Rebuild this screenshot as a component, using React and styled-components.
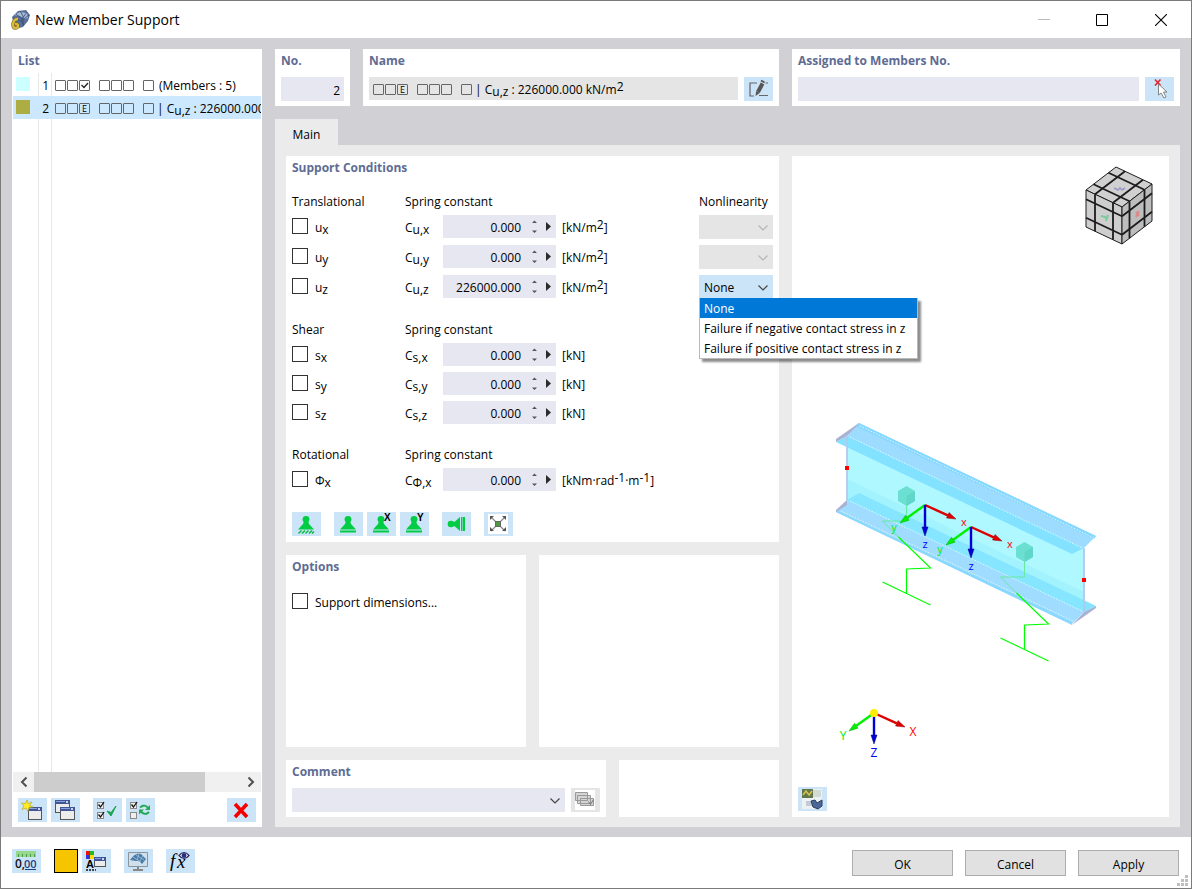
import React, { useState } from 'react';
import styled, { createGlobalStyle, css } from 'styled-components';

const GlobalStyle = createGlobalStyle`
  *,
  *::before,
  *::after {
    box-sizing: border-box;
  }

  body {
    margin: 0;
    color: #000;
    background: #fff;
    font-family: 'Open Sans', 'Noto Sans', sans-serif;
    font-size: 12px;
    line-height: 20px;
  }

  button,
  input,
  select {
    color: inherit;
    font: inherit;
  }
`;

const Window = styled.div`
  display: flex;
  flex-direction: column;
  min-width: 1100px;
  min-height: 100vh;
  border: 1px solid #7b7b7b;
`;

const TitleBar = styled.header`
  display: flex;
  align-items: center;
  height: 37px;
  padding-left: 8px;
  background: #fff;

  h1 {
    flex: 1;
    margin: 0 0 0 5px;
    font-size: 14px;
    font-weight: 400;
  }
`;

const WindowButton = styled.button`
  display: grid;
  place-items: center;
  width: ${({ $wide }) => ($wide ? 60 : 58)}px;
  height: 36px;
  padding: 0;
  border: 0;
  background: none;
`;

const Workspace = styled.main`
  display: flex;
  flex: 1;
  gap: 13px;
  padding: 11px 11px 10px;
  background: #d1d0d5;
`;

const Panel = styled.section`
  display: flex;
  flex-direction: column;
  min-width: 0;
  padding: 0 6px 5px;
  background: #fff;
`;

const PanelTitle = styled.h2`
  margin: 0;
  color: #5e6c94;
  font-size: 12px;
  font-weight: 700;
  line-height: 23px;
`;

const ListPanel = styled(Panel)`
  flex: 0 0 250px;
`;

const Tree = styled.ul`
  flex: 1;
  margin: 1px -5px 0;
  padding: 0;
  overflow: hidden;
  list-style: none;
  background:
    linear-gradient(#e8e8e8, #e8e8e8) 25px 0 / 1px 100% no-repeat,
    linear-gradient(#e8e8e8, #e8e8e8) 38px 0 / 1px 100% no-repeat;
`;

const TreeRow = styled.li`
  display: grid;
  grid-template-columns: 14px 15px 1fr;
  align-items: center;
  column-gap: 5px;
  height: 23px;
  padding: 2px 0 0 3px;
  overflow: hidden;
  white-space: nowrap;
  background: ${({ $selected }) => ($selected ? '#cce8ff' : 'transparent')};

  > :nth-child(2) {
    padding-right: 1px;
    text-align: right;
  }
`;

const Swatch = styled.span`
  width: 14px;
  height: 14px;
  margin-bottom: 4px;
  background: ${({ $color }) => $color};
`;

const Caption = styled.span`
  display: flex;
  align-items: center;
  white-space: pre;
`;

const CodeGroup = styled.span`
  display: flex;
  gap: 1px;
  margin-right: ${({ $gap = 9 }) => $gap}px;
`;

const CodeBox = styled.span`
  display: grid;
  place-items: center;
  width: 11px;
  height: 11px;
  border: 1px solid #666;
  border-radius: 1px;
  color: #000;
  font-size: 9px;
  line-height: 9px;
`;

const ScrollBar = styled.div`
  display: flex;
  align-items: center;
  height: 20px;
  margin: 0 -5px 6px;
  background: #f0f0f0;

  button {
    display: grid;
    place-items: center;
    width: 21px;
    height: 20px;
    padding: 0;
    border: 0;
    background: none;
  }
`;

const ScrollTrack = styled.div`
  flex: 1;

  &::before {
    content: '';
    display: block;
    width: 83%;
    height: 20px;
    background: #cdcdcd;
  }
`;

const Toolbar = styled.div`
  display: flex;
  align-items: center;
`;

const ToolGroup = styled.div`
  display: flex;
  gap: 4px;
  margin-right: 13px;

  &:last-child {
    margin: 0 0 0 ${({ $end }) => ($end ? 'auto' : 0)};
  }
`;

const IconButton = styled.button`
  flex: none;
  width: 29px;
  height: 24px;
  padding: 0;
  border: 0;
  background: ${({ $muted }) => ($muted ? '#e5e5e5' : '#cce4f7')};

  svg {
    display: block;
  }
`;

const Content = styled.div`
  display: flex;
  flex: 1;
  flex-direction: column;
  min-width: 0;
`;

const IdentityRow = styled.div`
  display: grid;
  grid-template-columns: 75px 416px minmax(0, 1fr);
  gap: 13px;
`;

const FieldRow = styled.div`
  display: flex;
  gap: 6px;
  margin-top: 5px;
`;

const TextField = styled.input`
  flex: 1;
  width: 100%;
  min-width: 0;
  height: 24px;
  padding: 2px 4px 0;
  border: 0;
  background: #e7e7f2;
  text-align: ${({ $right }) => ($right ? 'right' : 'left')};
`;

const NameField = styled.div`
  display: flex;
  flex: 1;
  align-items: center;
  height: 23px;
  padding: 2px 0 0 4px;
  background: #e5e5e5;
`;

const Tabs = styled.div`
  display: flex;
  margin-top: 13px;

  button {
    width: 63px;
    height: 26px;
    padding: 6px 0 0;
    border: 0;
    background: #ebebeb;
  }
`;

const TabPage = styled.div`
  display: grid;
  flex: 1;
  grid-template-columns: 493px minmax(0, 1fr);
  gap: 13px;
  padding: 11px 11px 10px;
  background: #ebebeb;
`;

const Column = styled.div`
  display: flex;
  flex-direction: column;
  gap: 13px;
`;

const Split = styled.div`
  display: grid;
  flex: ${({ $grow }) => ($grow ? 1 : 'none')};
  grid-template-columns: ${({ $columns }) => $columns};
  gap: 13px;
`;

const ConditionsPanel = styled(Panel)`
  padding-bottom: 6px;
`;

const Group = styled.div`
  display: grid;
  gap: 6px;
  margin-top: ${({ $first }) => ($first ? 10 : 18)}px;
`;

const gridColumns = css`
  display: grid;
  grid-template-columns: 113px 38px 119px 1fr 74px;
`;

const GroupHead = styled.div`
  ${gridColumns}
  margin-bottom: -6px;
  line-height: 26px;
  white-space: nowrap;

  > :last-child {
    grid-column: 5;
  }

  > :nth-child(2) {
    grid-column: 2 / 4;
  }
`;

const Subscript = styled.sub`
  font-size: 12px;
  line-height: 0;
  vertical-align: -2px;
`;

const Superscript = styled.sup`
  font-size: 12px;
  line-height: 0;
  vertical-align: 3px;
`;

const ConditionRow = styled.div`
  ${gridColumns}
  align-items: start;
`;

const RowText = styled.span`
  display: block;
  padding-top: 3px;
`;

const CheckLabel = styled.label`
  display: flex;
  align-items: flex-start;
  gap: 7px;
`;

const CheckBox = styled.input.attrs({ type: 'checkbox' })`
  appearance: none;
  width: 16px;
  height: 16px;
  margin: 3px 0 0;
  border: 1px solid #333;
  background: #fff;

  &:checked {
    background: #333;
    box-shadow: inset 0 0 0 3px #fff;
  }
`;

const SpinField = styled.div`
  display: flex;
  width: 113px;
  height: 23px;
  background: #e7e7f2;

  input {
    flex: 1;
    min-width: 0;
    padding: 2px 7px 0 0;
    border: 0;
    background: none;
    text-align: right;
  }
`;

const SpinButton = styled.button`
  display: grid;
  place-items: center;
  width: 13px;
  padding: 0;
  border: 0;
  background: none;

  &:last-child {
    width: 15px;
  }
`;

const SelectBox = styled.div`
  position: relative;
  min-width: 0;

  select {
    display: block;
    appearance: none;
    width: 100%;
    height: 24px;
    padding: 2px 20px 0 5px;
    border: 0;
    border-radius: 0;
    background: ${({ $tone }) => $tone};
    opacity: 1;
  }

  > svg {
    position: absolute;
    top: 9px;
    right: 4px;
    pointer-events: none;
  }
`;

const CommentSelect = styled(SelectBox)`
  flex: 1;
`;

const Menu = styled.ul`
  position: absolute;
  z-index: 2;
  top: 23px;
  left: 0;
  width: 219px;
  margin: 0;
  padding: 0;
  border: 1px solid #bababa;
  border-top: 0;
  background: #fff;
  box-shadow: 3px 3px 2px rgba(0, 0, 0, 0.45);
  list-style: none;
  white-space: nowrap;
`;

const MenuItem = styled.li`
  height: 20px;
  padding-left: 4px;
  color: ${({ $active }) => ($active ? '#fff' : '#000')};
  background: ${({ $active }) => ($active ? '#0078d7' : 'transparent')};
  line-height: 22px;
`;

const SupportTools = styled(Toolbar)`
  margin-top: 21px;
`;

const OptionsBody = styled.div`
  margin-top: 12px;
`;

const Viewer = styled.div`
  position: relative;
  min-width: 0;
  background: #fff;

  > svg {
    position: absolute;
    width: 100%;
    height: 100%;
  }

  > button {
    position: absolute;
    bottom: 6px;
    left: 6px;
  }
`;

const Footer = styled.footer`
  position: relative;
  display: flex;
  align-items: center;
  justify-content: space-between;
  height: 51px;
  padding: 0 11px 4px;
  background: #fff;
`;

const ColorButton = styled.button`
  width: 24px;
  height: 24px;
  border: 1px solid #000;
  background: #f7c400;
`;

const Actions = styled.div`
  display: flex;
  gap: 12px;
  margin: 5px 1px 0 0;
`;

const ActionButton = styled.button`
  width: 101px;
  height: 26px;
  padding: 3px 0 0;
  border: 1px solid #adadad;
  background: #e1e1e1;
`;

const Grip = styled.svg`
  position: absolute;
  right: 3px;
  bottom: 2px;
`;

const Glyph = ({ children }) => (
  <svg width="29" height="24" viewBox="0 0 29 24" aria-hidden="true">
    {children}
  </svg>
);

const Tool = ({ label, muted, children }) => (
  <IconButton type="button" aria-label={label} title={label} $muted={muted}>
    <Glyph>{children}</Glyph>
  </IconButton>
);

const Chevron = ({ color = '#444' }) => (
  <svg width="12" height="8" viewBox="0 0 12 8" aria-hidden="true">
    <path d="M1.5 1.5L6 6L10.5 1.5" fill="none" stroke={color} strokeWidth="1.2" />
  </svg>
);

const MiniWindow = ({ x, y, w = 14, h = 12 }) => (
  <g transform={`translate(${x} ${y})`}>
    <rect x=".5" y=".5" width={w - 1} height={h - 1} fill="#ececec" stroke="#555" />
    <rect width={w} height="4" fill="#3f5596" />
    <path d={`M1 1.5H${w - 5}`} stroke="#8ba0dc" />
    <path d={`M${w - 4} 2h2`} stroke="#fff" strokeWidth="1.5" />
  </g>
);

const Stamp = ({ hatched, letter }) => (
  <>
    <circle cx="14" cy="7.3" r="3.4" fill="#00cc44" />
    <path d="M12 9h4l1 3 5 5.5H6L11 12z" fill="#00cc44" />
    {hatched ? (
      <path
        d="M6.500 21.500l3-3M10 21.500l3-3M13.500 21.500l3-3M17 21.500l3-3M20 21.500l2-2"
        stroke="#00b83d"
        strokeWidth="1.4"
      />
    ) : (
      <path d="M6 19.500h16" stroke="#00cc44" strokeWidth="2" />
    )}
    {letter && (
      <text x="17" y="9" fontSize="10" fontWeight="700" fontFamily="Liberation Sans, sans-serif">
        {letter}
      </text>
    )}
  </>
);

const TickedBox = ({ x, y, ticked = true }) => (
  <g transform={`translate(${x} ${y})`}>
    <rect x=".5" y=".5" width="6" height="6" fill="#eee" stroke="#8a8a8a" />
    {ticked && <path d="M1.5 2.500l2 2.500L7 0" fill="none" stroke="#111" strokeWidth="1.3" />}
  </g>
);

const AppIcon = () => (
  <svg width="21" height="21" viewBox="0 0 21 21" aria-hidden="true">
    <path d="M3 8L9 2l8-1 4 5-2 6-5 6-8 2z" fill="#5a6f98" />
    <path d="M5 6l6-3 7 1 1 5-4 1-4-3z" fill="#a6b9d6" />
    <path
      d="M7 5l6 5 5-7M4 9l8 3 8-6M11 2l3 5v10M12 12l3 4"
      fill="none"
      stroke="#344b78"
      strokeWidth=".8"
    />
    <path d="M9 10C3 10 3 19 6 19c4 0 4-5 0-4" fill="none" stroke="#6b6128" strokeWidth="3.600" />
    <path d="M9 10C3 10 3 19 6 19c4 0 4-5 0-4" fill="none" stroke="#dcba3a" strokeWidth="2.400" />
  </svg>
);

// Three groups of restraint boxes; the third box of the first group carries a mark.
const RestraintCode = ({ mark }) => (
  <>
    <CodeGroup>
      <CodeBox />
      <CodeBox />
      <CodeBox>
        {mark || (
          <svg width="9" height="9" viewBox="0 0 9 9" aria-hidden="true">
            <path d="M1.500 4L4 6.500L8 2" fill="none" stroke="#222" strokeWidth="1.300" />
          </svg>
        )}
      </CodeBox>
    </CodeGroup>
    <CodeGroup>
      <CodeBox />
      <CodeBox />
      <CodeBox />
    </CodeGroup>
    <CodeGroup $gap={mark ? 3 : 5}>
      <CodeBox />
    </CodeGroup>
  </>
);

const areaUnit = (
  <>
    [kN/m<Superscript>2</Superscript>]
  </>
);

const groups = [
  {
    title: 'Translational',
    symbol: 'u',
    unit: areaUnit,
    rows: [
      { axis: 'x', value: '0.000', select: 'disabled' },
      { axis: 'y', value: '0.000', select: 'disabled' },
      { axis: 'z', value: '226000.000', select: 'open' },
    ],
  },
  {
    title: 'Shear',
    symbol: 's',
    unit: '[kN]',
    rows: [
      { axis: 'x', value: '0.000' },
      { axis: 'y', value: '0.000' },
      { axis: 'z', value: '0.000' },
    ],
  },
  {
    title: 'Rotational',
    symbol: 'Φ',
    unit: (
      <>
        [kNm·rad<Superscript>-1</Superscript>·m<Superscript>-1</Superscript>]
      </>
    ),
    rows: [{ axis: 'x', value: '0.000' }],
  },
];

const nonlinearities = [
  'None',
  'Failure if negative contact stress in z',
  'Failure if positive contact stress in z',
];

const NonlinearitySelect = ({ axis, state }) => {
  const [value, setValue] = useState(nonlinearities[0]);
  const open = state === 'open';

  return (
    <SelectBox $tone={open ? '#cce4f7' : '#e5e5e5'}>
      {open ? (
        <select
          aria-label={`Nonlinearity ${axis}`}
          value={value}
          onChange={e => setValue(e.target.value)}>
          {nonlinearities.map(item => (
            <option key={item}>{item}</option>
          ))}
        </select>
      ) : (
        <select aria-label={`Nonlinearity ${axis}`} disabled />
      )}
      <Chevron color={open ? '#444' : '#b5b5b5'} />
      {open && (
        <Menu role="listbox" aria-label="Nonlinearity">
          {nonlinearities.map(item => (
            <MenuItem
              key={item}
              role="option"
              aria-selected={item === value}
              $active={item === value}
              onClick={() => setValue(item)}>
              {item}
            </MenuItem>
          ))}
        </Menu>
      )}
    </SelectBox>
  );
};

const Condition = ({ symbol, unit, axis, value, select }) => {
  const id = `c-${symbol}-${axis}`;

  return (
    <ConditionRow>
      <CheckLabel>
        <CheckBox />
        <RowText>
          {symbol}
          <Subscript>{axis}</Subscript>
        </RowText>
      </CheckLabel>
      <RowText as="label" htmlFor={id}>
        C
        <Subscript>
          {symbol},{axis}
        </Subscript>
      </RowText>
      <SpinField>
        <input id={id} type="text" defaultValue={value} />
        <SpinButton type="button" aria-label="Step value">
          <svg width="7" height="15" viewBox="0 0 7 15" aria-hidden="true">
            <path d="M1 4L3.500 1.500L6 4zM1 11.500L3.500 14L6 11.500z" fill="#555" />
          </svg>
        </SpinButton>
        <SpinButton type="button" aria-label="More">
          <svg width="5" height="9" viewBox="0 0 5 9" aria-hidden="true">
            <path d="M0 0L5 4.500L0 9z" fill="#2b2b2b" />
          </svg>
        </SpinButton>
      </SpinField>
      <RowText>{unit}</RowText>
      {select && <NonlinearitySelect axis={axis} state={select} />}
    </ConditionRow>
  );
};

const Arrow = ({ from, to, color, dark }) => {
  const dx = to[0] - from[0];
  const dy = to[1] - from[1];
  const len = Math.hypot(dx, dy);
  const ux = dx / len;
  const uy = dy / len;
  const bx = to[0] - ux * 9;
  const by = to[1] - uy * 9;

  return (
    <g>
      <path d={`M${from}L${bx} ${by}`} stroke={color} strokeWidth="2.400" />
      <path
        d={`M${to}L${bx - uy * 3} ${by + ux * 3}L${bx + uy * 3} ${by - ux * 3}z`}
        fill={color}
        stroke={dark}
        strokeWidth=".5"
      />
    </g>
  );
};

const Triad = ({ x, y, labels, big }) => (
  <g fontSize={big ? 12 : 11} textAnchor="middle">
    <Arrow from={[x, y]} to={[x + 31, y + 14]} color="#dd0000" dark="#900" />
    <Arrow from={[x, y]} to={[x - 25, y + 18]} color="#00f000" dark="#0a0" />
    <Arrow from={[x, y]} to={[x, y + 31]} color="#0000d8" dark="#008" />
    {big && <circle cx={x} cy={y} r="4" fill="#ffee00" />}
    <text x={x + 39} y={y + (big ? 23 : 21)} fill="#f00">{labels[0]}</text>
    <text x={x - 31} y={y + (big ? 27 : 26)} fill="#0e0">{labels[1]}</text>
    <text x={x} y={y + (big ? 44 : 43)} fill="#00f">{labels[2]}</text>
  </g>
);

const Spring = ({ x, y }) => (
  <g transform={`translate(${x} ${y})`} fill="none">
    <path d="M0 0V25L-24 25L-8 41" stroke="#66eaa0" />
    <path d="M-8 41L24 72L0 73V97M-24 86L24 109" stroke="#00ff00" strokeWidth="1.200" />
    <path d="M0 -10L8.500 -5V5L0 10L-8.500 5V-5z" fill="#6be0d2" />
    <path d="M0 0L8.500 -5V5L0 10z" fill="#60d6c8" />
  </g>
);

// One side of the view cube, with its edge strips at a quarter and three quarters.
const CubeSide = ({ origin: [x, y], u, v, fill }) => {
  const at = (a, b) => `${x + u[0] * a + v[0] * b} ${y + u[1] * a + v[1] * b}`;

  return (
    <g stroke="#1c1c1c">
      <path
        d={`M${at(0, 0)}L${at(1, 0)}L${at(1, 1)}L${at(0, 1)}z`}
        fill={fill}
        strokeWidth="1"
      />
      {[0.25, 0.75].map(t => (
        <path key={t} d={`M${at(t, 0)}L${at(t, 1)}M${at(0, t)}L${at(1, t)}`} strokeWidth="1.800" />
      ))}
    </g>
  );
};

const Scene = () => (
  <svg viewBox="0 0 377 661" role="img" aria-label="Member support preview">
    <g transform="translate(-792 -156)">
      <CubeSide origin={[1116, 167]} u={[-30, 23]} v={[36, 17]} fill="#d0d0d0" />
      <CubeSide origin={[1086, 190]} u={[36, 17]} v={[0, 37]} fill="#cecece" />
      <CubeSide origin={[1122, 207]} u={[30, -23]} v={[0, 37]} fill="#bdbdbd" />
      <path d="M1114 188l4 2 2-2 2 2 3-2" fill="none" stroke="#9a9ac8" strokeWidth="1.600" />
      <path d="M1101 216l4 1 2 2M1108 215l-2 6" fill="none" stroke="#7c9" strokeWidth="2" />
      <path d="M1136 212l3 4M1139 211l-3 6" fill="none" stroke="#d88" strokeWidth="2" />

      <path d="M847 435L1084 548V612L847 500z" fill="#aff8ff" />
      <path d="M859 493L1096 606L1084 612L847 500z" fill="#84e3ff" />
      <path d="M847 479L870 490L1084 592V612L847 500z" fill="#8ceaff" opacity=".35" />
      <path d="M836 442L847 436L1084 548L1072 554z" fill="#83e2ff" />
      <path d="M859 423L1096 536L1084 548L847 436z" fill="#9edcff" />
      <path d="M859 423L1096 536L1094 539L855 426z" fill="#88d8ff" />
      <path d="M847 500L1084 612L1072 624L836 512z" fill="#9fdcff" />
      <path d="M836 510L1072 622V625L836 512z" fill="#88d8ff" />
      <path
        d="M860 426L1094 538M850 437L1084 549M850 501L1084 612M841 511L1073 621"
        stroke="#d9f7ff"
        strokeDasharray="1.500 1.500"
      />
      <path d="M859 423L836 439V442L847 436L856 427z" fill="#a9b2d2" />
      <path d="M847 500L836 510V512L847 505z" fill="#a9b2d2" />
      <path d="M1096 606V608L1072 625L1084 612z" fill="#a9b2d2" />
      <path d="M847 435V500M1084 548V612" stroke="#b0c9ee" strokeWidth="1.800" />

      <Spring x={906.5} y={496} />
      <Spring x={1024.5} y={552} />
      <Triad x={925} y={505} labels={['x', 'y', 'z']} />
      <Triad x={971} y={527} labels={['x', 'y', 'z']} />
      <path d="M845 466h4v4h-4zM1082 578h4v4h-4z" fill="#f00" />
      <Triad x={874} y={713} labels={['X', 'Y', 'Z']} big />
    </g>
  </svg>
);

const ListSection = () => (
  <ListPanel>
    <PanelTitle>List</PanelTitle>
    <Tree>
      <TreeRow>
        <Swatch $color="#ccffff" />
        <span>1</span>
        <Caption>
          <RestraintCode />
          <span>(Members : 5)</span>
        </Caption>
      </TreeRow>
      <TreeRow $selected>
        <Swatch $color="#acad42" />
        <span>2</span>
        <Caption>
          <RestraintCode mark="E" />
          <span>
            | C<Subscript>u,z</Subscript> : 226000.000
          </span>
        </Caption>
      </TreeRow>
    </Tree>
    <ScrollBar>
      <button type="button" aria-label="Scroll left">
        <svg width="8" height="12" viewBox="0 0 8 12" aria-hidden="true">
          <path d="M6.500 1.500L2 6l4.500 4.500" fill="none" stroke="#505050" strokeWidth="2" />
        </svg>
      </button>
      <ScrollTrack />
      <button type="button" aria-label="Scroll right">
        <svg width="8" height="12" viewBox="0 0 8 12" aria-hidden="true">
          <path d="M1.500 1.500L6 6l-4.500 4.500" fill="none" stroke="#505050" strokeWidth="2" />
        </svg>
      </button>
    </ScrollBar>
    <Toolbar>
      <ToolGroup>
        <Tool label="New">
          <MiniWindow x={10} y={9} h={13} />
          <path
            d="M9 2l1 3.500 4-1.500-2.500 3.500L15 9l-4 .5-1 4-2-3.500-4 1.500 2-3.500L3.500 5l4 .5z"
            fill="#ffee22"
            stroke="#b59a18"
            strokeWidth=".6"
          />
        </Tool>
        <Tool label="Copy">
          <MiniWindow x={4} y={2} w={15} h={13} />
          <MiniWindow x={9} y={9} w={15} h={13} />
        </Tool>
      </ToolGroup>
      <ToolGroup>
        <Tool label="Select all">
          <TickedBox x={4} y={4} />
          <TickedBox x={4} y={14} />
          <path d="M14 13l4 5 5-10-5 6.500z" fill="#19a550" stroke="#19a550" strokeLinejoin="round" />
        </Tool>
        <Tool label="Invert selection">
          <TickedBox x={4} y={4} />
          <TickedBox x={4} y={14} ticked={false} />
          <path d="M14 9.500q5-4 8 .5M23 14q-4 4-8-.5" fill="none" stroke="#23aa55" strokeWidth="2" />
          <path d="M24 7v5h-5zM13 16.500v-5h5z" fill="#23aa55" />
        </Tool>
      </ToolGroup>
      <ToolGroup $end>
        <Tool label="Delete">
          <path d="M8 6L20 19M20 6L8 19" stroke="#f40000" strokeWidth="3.600" />
        </Tool>
      </ToolGroup>
    </Toolbar>
  </ListPanel>
);

const IdentitySection = () => (
  <IdentityRow>
    <Panel>
      <PanelTitle as="label" htmlFor="support-no">No.</PanelTitle>
      <FieldRow>
        <TextField id="support-no" $right defaultValue="2" />
      </FieldRow>
    </Panel>
    <Panel>
      <PanelTitle>Name</PanelTitle>
      <FieldRow>
        <NameField>
          <Caption>
            <RestraintCode mark="E" />
            <span>
              | C<Subscript>u,z</Subscript> : 226000.000 kN/m<Superscript>2</Superscript>
            </span>
          </Caption>
        </NameField>
        <Tool label="Edit name">
          <path
            d="M13 6H6V19H10M15 18.500H24M21.500 6h2.500"
            fill="none"
            stroke="#666"
            strokeWidth="1.200"
          />
          <path d="M18.500 6.500L14 15" stroke="#555" strokeWidth="4" />
          <path d="M17 3.500l3.500 2" stroke="#555" strokeWidth="2" />
          <path d="M12.200 14l3.500 2-4.200 3z" fill="#555" />
        </Tool>
      </FieldRow>
    </Panel>
    <Panel>
      <PanelTitle as="label" htmlFor="members">Assigned to Members No.</PanelTitle>
      <FieldRow>
        <TextField id="members" />
        <Tool label="Pick members">
          <path d="M10 2.500l5.500 6M15.500 2.500L10 8.500" stroke="#e8202a" strokeWidth="1.600" />
          <path
            d="M13.500 7v11l2.500-2 3 5 2-1-2.500-5H22z"
            fill="#fff"
            stroke="#777"
            strokeWidth=".9"
          />
        </Tool>
      </FieldRow>
    </Panel>
  </IdentityRow>
);

const ConditionsSection = () => (
  <ConditionsPanel>
    <PanelTitle>Support Conditions</PanelTitle>
    {groups.map(({ title, symbol, unit, rows }, index) => (
      <Group key={title} $first={index === 0}>
        <GroupHead>
          <span>{title}</span>
          <span>Spring constant</span>
          {index === 0 && <span>Nonlinearity</span>}
        </GroupHead>
        {rows.map(row => (
          <Condition key={row.axis} symbol={symbol} unit={unit} {...row} />
        ))}
      </Group>
    ))}
    <SupportTools>
      <ToolGroup>
        <Tool label="Fixed">
          <Stamp hatched />
        </Tool>
      </ToolGroup>
      <ToolGroup>
        <Tool label="Hinged">
          <Stamp />
        </Tool>
        <Tool label="Sliding in X">
          <Stamp letter="X" />
        </Tool>
        <Tool label="Sliding in Y">
          <Stamp letter="Y" />
        </Tool>
      </ToolGroup>
      <ToolGroup>
        <Tool label="Lateral">
          <circle cx="9" cy="12" r="3.300" fill="#00cc44" />
          <path
            d="M10 10.500l3-1 5-4.500v14l-5-4.500-3-1zM19 5h1v14h-1zM20.500 5H23v14h-2.500z"
            fill="#00cc44"
          />
        </Tool>
      </ToolGroup>
      <ToolGroup>
        <Tool label="Free">
          <rect x="4" y="2" width="20" height="20" fill="#fff" />
          <path d="M7 5l14 14M21 5L7 19" stroke="#888" strokeWidth="1.200" />
          <path d="M6 4h4L6 8zM22 4v4l-4-4zM6 19v-4l4 4zM22 19h-4l4-4z" fill="#555" />
          <rect x="11.500" y="9.500" width="5" height="5" fill="#4b9a3e" stroke="#666" />
        </Tool>
      </ToolGroup>
    </SupportTools>
  </ConditionsPanel>
);

const CommentPanel = () => (
  <Panel>
    <PanelTitle as="label" htmlFor="comment">Comment</PanelTitle>
    <FieldRow>
      <CommentSelect $tone="#e7e7f2">
        <select id="comment" />
        <Chevron />
      </CommentSelect>
      <Tool label="Comment library" muted>
        <rect x="4" y="2" width="20" height="20" fill="#fff" />
        <path
          d="M4.500 4.500h12v8h-12zM6.500 7.500h13v8h-13zM9.500 10.500h13v7h-13z"
          fill="#d4d4d4"
          stroke="#999"
        />
        <path d="M17.500 13.500l2 3 3-5" fill="none" stroke="#777" />
      </Tool>
    </FieldRow>
  </Panel>
);

const App = () => (
  <Window>
    <GlobalStyle />
    <TitleBar>
      <AppIcon />
      <h1>New Member Support</h1>
      <WindowButton type="button" aria-label="Minimize" disabled>
        <svg width="12" height="12" viewBox="0 0 12 12">
          <path d="M0 5.500h12" stroke="#bbb" />
        </svg>
      </WindowButton>
      <WindowButton type="button" aria-label="Maximize">
        <svg width="12" height="12" viewBox="0 0 12 12">
          <path d="M.5.5h11v11H.5z" fill="none" stroke="#000" />
        </svg>
      </WindowButton>
      <WindowButton type="button" aria-label="Close" $wide>
        <svg width="12" height="12" viewBox="0 0 12 12">
          <path d="M0 0l12 12M12 0L0 12" stroke="#000" strokeWidth="1.100" />
        </svg>
      </WindowButton>
    </TitleBar>

    <Workspace>
      <ListSection />
      <Content>
        <IdentitySection />
        <Tabs role="tablist">
          <button type="button" role="tab" aria-selected="true">
            Main
          </button>
        </Tabs>
        <TabPage>
          <Column>
            <ConditionsSection />
            <Split $grow $columns="1fr 1fr">
              <Panel>
                <PanelTitle>Options</PanelTitle>
                <OptionsBody>
                  <CheckLabel>
                    <CheckBox />
                    <RowText>Support dimensions...</RowText>
                  </CheckLabel>
                </OptionsBody>
              </Panel>
              <Panel />
            </Split>
            <Split $columns="2fr 1fr">
              <CommentPanel />
              <Panel />
            </Split>
          </Column>
          <Viewer>
            <Scene />
            <Tool label="View settings">
              <rect x="4" y="2" width="20" height="20" fill="#eef1f4" />
              <path d="M4 2h11v9H4z" fill="#62774e" />
              <path d="M5 8l3-4 3 4 3-4" fill="none" stroke="#d9c34a" strokeWidth="1.500" />
              <path d="M15 3h8v7h-8z" fill="#d3dcd4" />
              <path d="M8 14h6v5H8z" fill="#c2cad6" />
              <path d="M13 14l4-1 2 3 5-3v6l-4 3-5-2z" fill="#4c6797" stroke="#2c3f60" />
            </Tool>
          </Viewer>
        </TabPage>
      </Content>
    </Workspace>

    <Footer>
      <Toolbar>
        <ToolGroup>
          <Tool label="Units and decimals">
            <path d="M4 2h20v6H4z" fill="#96d98c" />
            <path d="M6.500 5v3M10.500 5v3M14.500 5v3M18.500 5v3M22.500 5v3" stroke="#4d9a48" />
            <text x="3" y="19" fontSize="12" fontWeight="600" fill="#111">0,</text>
            <text x="12" y="19" fontSize="11" fontWeight="600" fill="#1b3f85">00</text>
            <path d="M13 20.500h11" stroke="#1b3f85" />
          </Tool>
        </ToolGroup>
        <ToolGroup>
          <ColorButton type="button" aria-label="Color" />
          <Tool label="Display properties">
            <path d="M4 2h4v4H4z" fill="#e11" />
            <path d="M8 2h4v4H8z" fill="#2b2" />
            <path d="M4 6h4v4H4z" fill="#33d" />
            <path d="M8 6h4v4H8z" fill="#fd0" />
            <text x="4" y="19" fontSize="11" fontWeight="700" fontFamily="Liberation Sans, sans-serif">
              A
            </text>
            <path d="M4 21h10" stroke="#111" strokeDasharray="2 1" strokeWidth="1.500" />
            <MiniWindow x={12} y={8} w={12} h={10} />
          </Tool>
        </ToolGroup>
        <ToolGroup>
          <Tool label="Preview">
            <path d="M4.500 3.500h19v14h-19z" fill="#cfdfec" stroke="#8a949c" />
            <path d="M6 11q6-8 11-6l5 5-4 5q-3-4-6-3z" fill="#4b7ba8" />
            <path d="M9 8l8 5M12 6l8 5M15 5l-2 6M19 7l-4 6" stroke="#a9c7e0" strokeWidth=".7" />
            <path d="M14 18v2M9 21h10" stroke="#888" strokeWidth="2" />
          </Tool>
        </ToolGroup>
        <ToolGroup>
          <Tool label="Formula">
            <text x="4" y="18" fontSize="19" fontStyle="italic" fontFamily="Liberation Serif, serif">
              f
            </text>
            <text x="11" y="19" fontSize="19" fontStyle="italic" fontFamily="Liberation Serif, serif">
              x
            </text>
            <path
              d="M13 6.500q5-6 10 0q-5 6-10 0z"
              fill="#fff"
              stroke="#2d2d66"
              strokeWidth="1.200"
            />
            <circle cx="18" cy="6.500" r="2.400" fill="#28307c" />
          </Tool>
        </ToolGroup>
      </Toolbar>
      <Actions>
        <ActionButton type="button">OK</ActionButton>
        <ActionButton type="button">Cancel</ActionButton>
        <ActionButton type="button">Apply</ActionButton>
      </Actions>
      <Grip width="11" height="11" viewBox="0 0 11 11" aria-hidden="true">
        <path
          d="M8 0h3v3H8zM4 4h3v3H4zM8 4h3v3H8zM0 8h3v3H0zM4 8h3v3H4zM8 8h3v3H8z"
          fill="#bfbfbf"
        />
      </Grip>
    </Footer>
  </Window>
);

export default App;
